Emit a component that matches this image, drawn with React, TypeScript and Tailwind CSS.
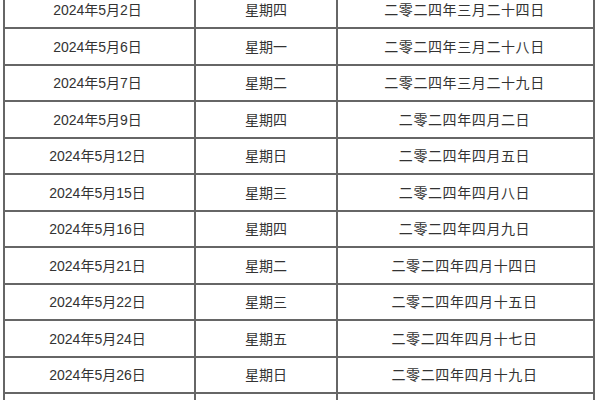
import React from "react";

const rows: [string, string, string][] = [
  ["2024年5月2日", "星期四", "二零二四年三月二十四日"],
  ["2024年5月6日", "星期一", "二零二四年三月二十八日"],
  ["2024年5月7日", "星期二", "二零二四年三月二十九日"],
  ["2024年5月9日", "星期四", "二零二四年四月二日"],
  ["2024年5月12日", "星期日", "二零二四年四月五日"],
  ["2024年5月15日", "星期三", "二零二四年四月八日"],
  ["2024年5月16日", "星期四", "二零二四年四月九日"],
  ["2024年5月21日", "星期二", "二零二四年四月十四日"],
  ["2024年5月22日", "星期三", "二零二四年四月十五日"],
  ["2024年5月24日", "星期五", "二零二四年四月十七日"],
  ["2024年5月26日", "星期日", "二零二四年四月十九日"],
  ["", "", ""],
];

export default function App() {
  return (
    <div className="w-[600px] h-[400px] overflow-hidden bg-white">
      <div
        className="ml-[3px] mt-[-9.5px] w-[592px] grid grid-cols-[191px_142px_257px] border-l-2 border-t-2 border-[#666] text-[14px] text-[#333]"
        style={{ fontFamily: '"Liberation Sans", "Noto Sans CJK SC", sans-serif' }}
      >
        {rows.map((r, i) => (
          <React.Fragment key={i}>
            <div className="h-[36.5px] border-r-2 border-b-2 border-[#666] flex items-center justify-center pt-[2px] pr-[4px]">
              {r[0]}
            </div>
            <div className="h-[36.5px] border-r-2 border-b-2 border-[#666] flex items-center justify-center pt-[2px]">
              {r[1]}
            </div>
            <div className="h-[36.5px] border-r-2 border-b-2 border-[#666] flex items-center justify-center pt-[2px] pr-[2px] tracking-[0.6px]">
              {r[2]}
            </div>
          </React.Fragment>
        ))}
      </div>
    </div>
  );
}
